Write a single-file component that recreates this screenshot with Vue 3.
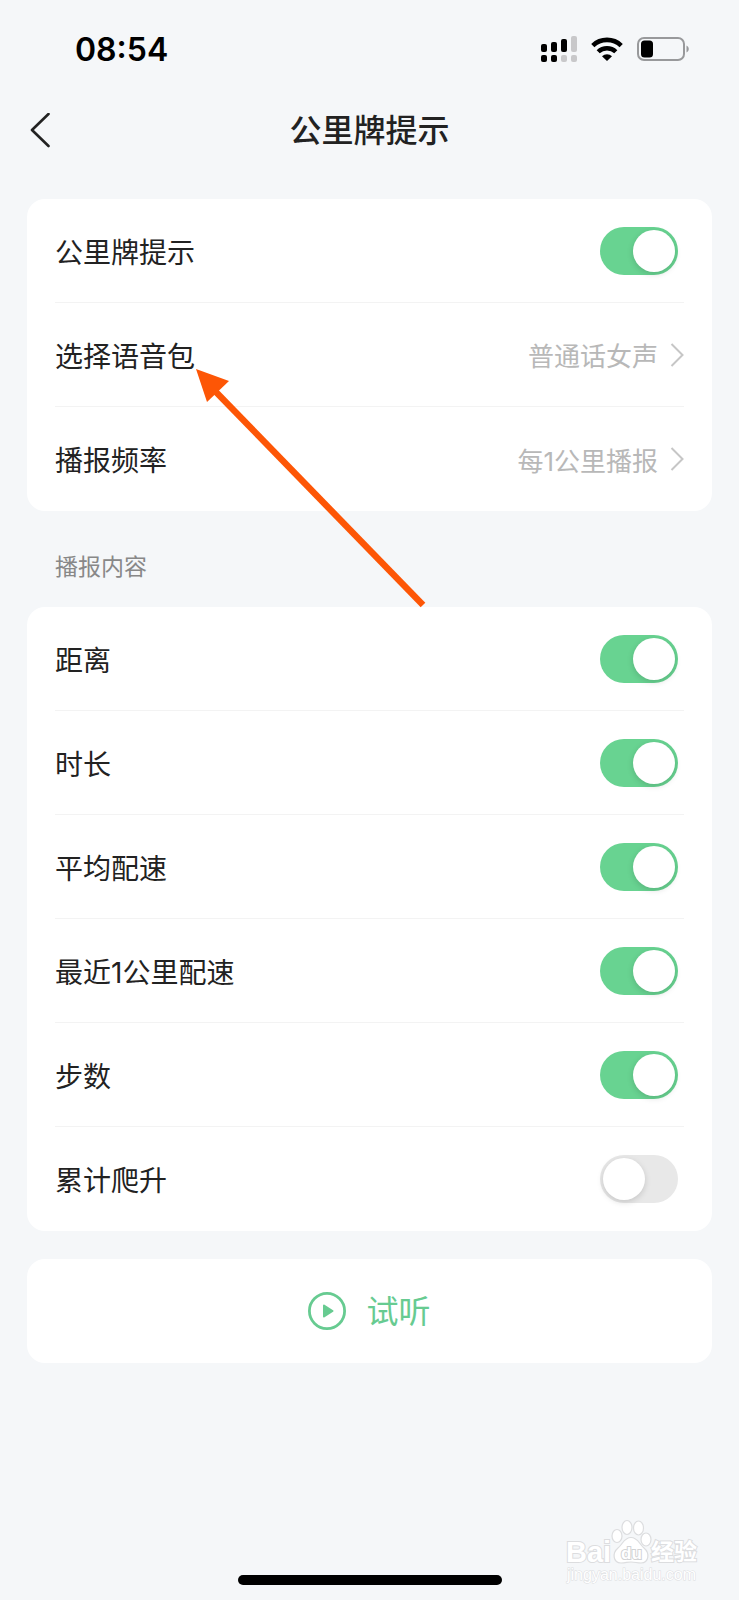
<script setup>
import { ref } from 'vue';

const enabled = ref(true);

const options = ref([
    { id: 'voice', label: '选择语音包', value: '普通话女声' },
    { id: 'frequency', label: '播报频率', value: '每1公里播报' },
]);

const contents = ref([
    { id: 'distance', label: '距离', on: true },
    { id: 'duration', label: '时长', on: true },
    { id: 'pace', label: '平均配速', on: true },
    { id: 'last-pace', label: '最近1公里配速', on: true },
    { id: 'steps', label: '步数', on: true },
    { id: 'climb', label: '累计爬升', on: false },
]);
</script>

<template>
    <div class="page">
        <div class="status">
            <span class="time">08:54</span>
            <div class="status-icons">
                <svg width="36" height="26" viewBox="0 0 36 26">
                    <rect x="0" y="8" width="6" height="8" rx="2" />
                    <rect x="10" y="6" width="6" height="10" rx="2" />
                    <rect x="20" y="3" width="6" height="13" rx="2" />
                    <rect x="30" y="0" width="6" height="16" rx="2" fill="#c8c8ca" />
                    <rect x="0" y="19" width="6" height="7" rx="2" />
                    <rect x="10" y="19" width="6" height="7" rx="2" />
                    <rect x="20" y="19" width="6" height="7" rx="2" fill="#c8c8ca" />
                    <rect x="30" y="19" width="6" height="7" rx="2" fill="#c8c8ca" />
                </svg>
                <svg width="32" height="24" viewBox="0 0 32 24">
                    <path d="M1.8 8.6 A20.5 20.5 0 0 1 30.2 8.6" fill="none" stroke="#000" stroke-width="4.6" />
                    <path d="M7.2 14.8 A12.6 12.6 0 0 1 24.8 14.8" fill="none" stroke="#000" stroke-width="4.4" />
                    <path d="M11 19.2 A7.2 7.2 0 0 1 21 19.2 L16 24 Z" />
                </svg>
                <svg width="52" height="24" viewBox="0 0 52 24">
                    <rect x="1" y="1" width="46" height="22" rx="6" fill="none" stroke="#98999b" stroke-width="2" />
                    <rect x="4" y="3.5" width="12" height="17" rx="3.5" />
                    <path d="M49.5 8.5 C52.5 10 52.5 14 49.5 15.5 Z" fill="#98999b" />
                </svg>
            </div>
        </div>

        <header class="nav">
            <button class="back" type="button" aria-label="返回">
                <svg width="20" height="36" viewBox="0 0 20 36">
                    <path d="M18.5 1 L2 17 L18.5 33" fill="none" stroke="#222" stroke-width="2.6" stroke-linecap="round" stroke-linejoin="round" />
                </svg>
            </button>
            <h1>公里牌提示</h1>
        </header>

        <main>
            <section class="card">
                <div class="row">
                    <label for="enabled">公里牌提示</label>
                    <input id="enabled" v-model="enabled" class="switch" type="checkbox">
                </div>
                <button v-for="item in options" :key="item.id" class="row" type="button">
                    <span>{{ item.label }}</span>
                    <span class="value">
                        {{ item.value }}
                        <svg width="14" height="24" viewBox="0 0 14 24">
                            <path d="M1.5 1 L12.5 12 L1.5 23" fill="none" stroke="#c6c6c6" stroke-width="2" />
                        </svg>
                    </span>
                </button>
            </section>

            <h2>播报内容</h2>

            <section class="card">
                <div v-for="item in contents" :key="item.id" class="row">
                    <label :for="item.id">{{ item.label }}</label>
                    <input :id="item.id" v-model="item.on" class="switch" type="checkbox">
                </div>
            </section>

            <button class="card listen" type="button">
                <svg width="38" height="38" viewBox="0 0 38 38">
                    <circle cx="19" cy="19" r="17.6" fill="none" stroke="#67cb91" stroke-width="2.8" />
                    <path d="M16 13.5 L24.5 19 L16 24.5 Z" fill="#67cb91" stroke="#67cb91" stroke-width="2" stroke-linejoin="round" />
                </svg>
                <span>试听</span>
            </button>
        </main>

        <div class="home-bar"></div>

        <svg class="arrow" width="232" height="242" viewBox="0 0 232 242">
            <path d="M19 22 L227 236" stroke="#fd5606" stroke-width="6.5" />
            <path d="M0 0 L33 12 L11 33 Z" fill="#fd5606" />
        </svg>

        <svg class="watermark" width="136" height="68" viewBox="0 0 136 68">
            <g class="watermark-text">
                <text x="2" y="42" font-size="29">Bai</text>
                <text x="87" y="40" font-size="23">经验</text>
                <text x="3" y="60" font-size="16" class="thin">jingyan.baidu.com</text>
            </g>
            <g fill="#fff" stroke="#dcdddf" stroke-width="1.2">
                <ellipse cx="53" cy="16" rx="5" ry="6.5" />
                <ellipse cx="63" cy="7.5" rx="5" ry="7" />
                <ellipse cx="74.5" cy="8" rx="5" ry="7" />
                <ellipse cx="82" cy="19.5" rx="5" ry="6.5" />
                <path d="M67 17.5 C60 17.5 59 24 54 28 C48 33 49 43 57 43 C62 43 63 42 67 42 C71 42 73 43 77 43 C85 43 86 33 80 28 C75 24 74 17.5 67 17.5 Z" />
            </g>
            <g class="watermark-text">
                <text x="57" y="39" font-size="17" class="hollow">du</text>
            </g>
        </svg>
    </div>
</template>

<style>
body {
    margin: 0;
    background: #f5f7f9;
}
</style>

<style scoped>
.page {
    position: relative;
    display: flex;
    flex-direction: column;
    min-height: 100vh;
    box-sizing: border-box;
    padding-bottom: 15px;
    background: #f5f7f9;
    color: #222;
    font-family: Inter, "Noto Sans CJK SC", sans-serif;
    overflow: hidden;
}
button {
    border: 0;
    padding: 0;
    background: none;
    color: inherit;
    font: inherit;
    cursor: pointer;
}
svg {
    display: block;
    flex: none;
}
.status {
    display: flex;
    align-items: center;
    justify-content: space-between;
    height: 98px;
    padding: 0 50px 0 75px;
}
.time {
    color: #000;
    font-size: 32px;
    font-weight: 600;
}
.status-icons {
    display: flex;
    align-items: center;
    gap: 14px;
}
.nav {
    display: grid;
    grid-template-columns: 40px 1fr 40px;
    align-items: center;
    height: 66px;
    padding: 0 30px;
}
h1 {
    margin: 0;
    font-size: 32px;
    font-weight: 500;
    line-height: 40px;
    text-align: center;
}
main {
    padding: 35px 27px 0;
}
.card {
    padding: 0 28px;
    border-radius: 18px;
    background: #fff;
}
.row {
    display: flex;
    align-items: center;
    justify-content: space-between;
    box-sizing: border-box;
    width: 100%;
    height: 104px;
    border-bottom: 1px solid #f3f3f3;
    font-size: 28px;
    text-align: left;
}
.row:last-child {
    border-bottom: 0;
}
.value {
    display: flex;
    align-items: center;
    gap: 12px;
    color: #b8b8b8;
    font-size: 26px;
}
.switch {
    appearance: none;
    box-sizing: border-box;
    width: 78px;
    height: 48px;
    margin: 0 6px 0 0;
    padding: 3px;
    border-radius: 24px;
    background: #e8e8e8;
    cursor: pointer;
}
.switch::before {
    content: "";
    display: block;
    width: 42px;
    height: 42px;
    border-radius: 50%;
    background: #fff;
    box-shadow: 0 2px 6px rgba(0, 0, 0, 0.15);
}
.switch:checked {
    background: #68d391;
}
.switch:checked::before {
    margin-left: 30px;
}
h2 {
    margin: 0;
    padding: 40px 28px 24px;
    color: #888;
    font-size: 23px;
    font-weight: 400;
    line-height: 32px;
}
.listen {
    display: flex;
    align-items: center;
    justify-content: center;
    gap: 20px;
    width: 100%;
    height: 104px;
    margin-top: 28px;
    color: #67cb91;
    font-size: 32px;
}
.listen span {
    padding-bottom: 4px;
}
.home-bar {
    width: 264px;
    height: 10px;
    margin: auto auto 0;
    border-radius: 5px;
    background: #000;
}
.arrow {
    position: absolute;
    top: 369px;
    left: 196px;
    pointer-events: none;
}
.watermark {
    position: absolute;
    right: 39px;
    bottom: 12px;
    overflow: visible;
}
.watermark-text {
    fill: #fff;
    stroke: #dcdddf;
    stroke-width: 2px;
    paint-order: stroke;
    font-family: "Liberation Sans", "Noto Sans CJK SC", sans-serif;
    font-weight: 700;
}
.hollow {
    stroke: #d2d3d5;
}
.thin {
    stroke-width: 1px;
    font-weight: 400;
}
</style>
